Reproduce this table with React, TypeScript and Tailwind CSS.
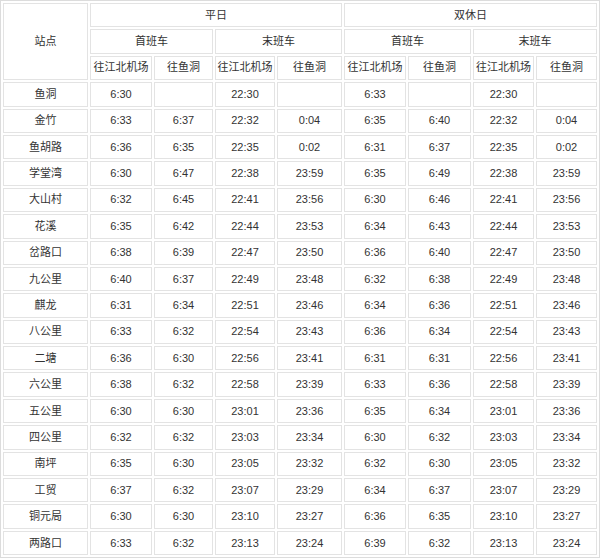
import React from "react";

// 站名 + 平日(首班 往江北机场/往鱼洞, 末班 往江北机场/往鱼洞) + 双休日(同上)
const rows: [string, ...string[]][] = [
  ["鱼洞", "6:30", "", "22:30", "", "6:33", "", "22:30", ""],
  ["金竹", "6:33", "6:37", "22:32", "0:04", "6:35", "6:40", "22:32", "0:04"],
  ["鱼胡路", "6:36", "6:35", "22:35", "0:02", "6:31", "6:37", "22:35", "0:02"],
  ["学堂湾", "6:30", "6:47", "22:38", "23:59", "6:35", "6:49", "22:38", "23:59"],
  ["大山村", "6:32", "6:45", "22:41", "23:56", "6:30", "6:46", "22:41", "23:56"],
  ["花溪", "6:35", "6:42", "22:44", "23:53", "6:34", "6:43", "22:44", "23:53"],
  ["岔路口", "6:38", "6:39", "22:47", "23:50", "6:36", "6:40", "22:47", "23:50"],
  ["九公里", "6:40", "6:37", "22:49", "23:48", "6:32", "6:38", "22:49", "23:48"],
  ["麒龙", "6:31", "6:34", "22:51", "23:46", "6:34", "6:36", "22:51", "23:46"],
  ["八公里", "6:33", "6:32", "22:54", "23:43", "6:36", "6:34", "22:54", "23:43"],
  ["二塘", "6:36", "6:30", "22:56", "23:41", "6:31", "6:31", "22:56", "23:41"],
  ["六公里", "6:38", "6:32", "22:58", "23:39", "6:33", "6:36", "22:58", "23:39"],
  ["五公里", "6:30", "6:30", "23:01", "23:36", "6:35", "6:34", "23:01", "23:36"],
  ["四公里", "6:32", "6:32", "23:03", "23:34", "6:30", "6:32", "23:03", "23:34"],
  ["南坪", "6:35", "6:30", "23:05", "23:32", "6:32", "6:30", "23:05", "23:32"],
  ["工贸", "6:37", "6:32", "23:07", "23:29", "6:34", "6:37", "23:07", "23:29"],
  ["铜元局", "6:30", "6:30", "23:10", "23:27", "6:36", "6:35", "23:10", "23:27"],
  ["两路口", "6:33", "6:32", "23:13", "23:24", "6:39", "6:32", "23:13", "23:24"],
];

const cell = "border border-[#e3e3e3] h-[24.4px] p-0 text-center align-middle font-normal";

export default function App() {
  return (
    <div className="w-[600px] h-[559px] bg-white overflow-hidden">
      <table
        className="w-[600px] table-fixed border-separate border-spacing-[2px] border border-[#dcdcdc] text-[11px] leading-none text-[#333] [font-family:'Liberation_Sans','Noto_Sans_CJK_SC',sans-serif]"
      >
        <colgroup>
          <col className="w-[85px]" />
          <col className="w-[62px]" />
          <col className="w-[59px]" />
          <col className="w-[60px]" />
          <col className="w-[65px]" />
          <col className="w-[62px]" />
          <col className="w-[63px]" />
          <col className="w-[61px]" />
          <col className="w-[61px]" />
        </colgroup>
        <thead>
          <tr>
            <th rowSpan={3} className={cell}>站点</th>
            <th colSpan={4} className={cell}>平日</th>
            <th colSpan={4} className={cell}>双休日</th>
          </tr>
          <tr>
            <th colSpan={2} className={cell}>首班车</th>
            <th colSpan={2} className={cell}>末班车</th>
            <th colSpan={2} className={cell}>首班车</th>
            <th colSpan={2} className={cell}>末班车</th>
          </tr>
          <tr>
            {[0, 1, 2, 3].map((i) => (
              <React.Fragment key={i}>
                <th className={cell}>往江北机场</th>
                <th className={cell}>往鱼洞</th>
              </React.Fragment>
            ))}
          </tr>
        </thead>
        <tbody>
          {rows.map((r) => (
            <tr key={r[0]}>
              {r.map((v, i) => (
                <td key={i} className={cell}>{v}</td>
              ))}
            </tr>
          ))}
        </tbody>
      </table>
    </div>
  );
}
